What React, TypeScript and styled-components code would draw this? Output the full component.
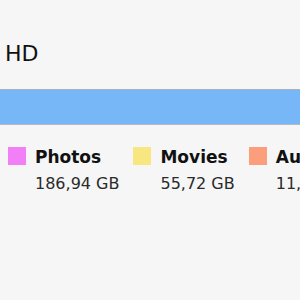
import styled, { createGlobalStyle } from 'styled-components'

const GlobalStyle = createGlobalStyle`
	html, body {
		margin: 0;
		padding: 0;
		background: #f6f6f6;
	}
	body {
		width: 300px;
		height: 300px;
		overflow: hidden;
		font-family: 'DejaVu Sans', 'Liberation Sans', sans-serif;
	}
`

const categories = [
	{ name: 'Photos', size: '186,94 GB', color: '#f27ff5' },
	{ name: 'Movies', size: '55,72 GB', color: '#f8e681' },
	{ name: 'Audio', size: '11,38 GB', color: '#fb9e7b' },
]

export default function App() {
	return (
		<>
			<GlobalStyle />
			<Panel>
				<DiskName>HD</DiskName>
				<UsageBar />
				<Legend>
					{categories.map((c) => (
						<LegendItem key={c.name}>
							<Swatch $color={c.color} />
							<LegendText>
								<CategoryName>{c.name}</CategoryName>
								<CategorySize>{c.size}</CategorySize>
							</LegendText>
						</LegendItem>
					))}
				</Legend>
			</Panel>
		</>
	)
}

const Panel = styled.div`
	width: 300px;
	height: 300px;
	overflow: hidden;
	padding-top: 42px;
	box-sizing: border-box;
`

const DiskName = styled.div`
	font-size: 22px;
	line-height: 24px;
	color: #111;
	padding-left: 5px;
`

const UsageBar = styled.div`
	margin-top: 23px;
	height: 34px;
	background: #77b7f8;
	border-top: 1px solid #a9b1ba;
	border-bottom: 1px solid #b4bac2;
`

const Legend = styled.div`
	display: flex;
	gap: 14px;
	padding-left: 8px;
	margin-top: 22px;
`

const LegendItem = styled.div`
	display: flex;
	gap: 9px;
	flex-shrink: 0;
`

const Swatch = styled.div<{ $color: string }>`
	width: 18px;
	height: 18px;
	background: ${(p) => p.$color};
	flex-shrink: 0;
`

const LegendText = styled.div`
	display: flex;
	flex-direction: column;
	gap: 7px;
`

const CategoryName = styled.div`
	font-size: 17px;
	line-height: 20px;
	font-weight: bold;
	color: #111;
	white-space: nowrap;
`

const CategorySize = styled.div`
	font-size: 16px;
	line-height: 20px;
	color: #2a2a2a;
	white-space: nowrap;
`
